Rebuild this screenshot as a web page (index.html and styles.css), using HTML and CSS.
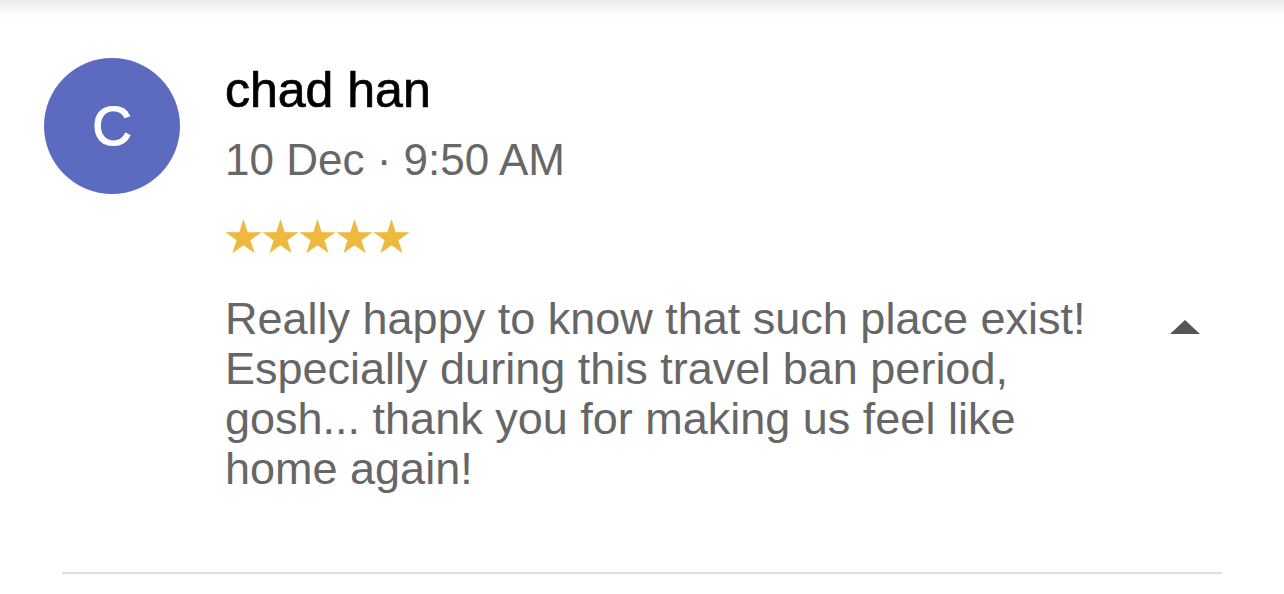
FILE: index.html
```html
<!DOCTYPE html>
<html lang="en">
<head>
  <meta charset="UTF-8" />
  <meta name="viewport" content="width=device-width, initial-scale=1.0" />
  <title>Review</title>
  <link rel="stylesheet" href="styles.css">
</head>
<body>
  <div class="top-shade"></div>
  <div class="review">
    <div class="avatar">C</div>
    <div class="review-body">
      <div class="name">chad han</div>
      <div class="date">10 Dec · 9:50 AM</div>
      <svg class="stars" width="186" height="35" viewBox="0 0 186 35" aria-label="5 stars">
        <defs>
          <polygon id="star" points="18.5,0 22.77,13.13 36.57,13.13 25.4,21.24 29.67,34.37 18.5,26.26 7.33,34.37 11.6,21.24 0.43,13.13 14.23,13.13"/>
        </defs>
        <use href="#star" x="0"/>
        <use href="#star" x="37"/>
        <use href="#star" x="74"/>
        <use href="#star" x="111"/>
        <use href="#star" x="148"/>
      </svg>
      <div class="text-row">
        <p class="text">Really happy to know that such place exist! Especially during this travel ban period, gosh... thank you for making us feel like home again!</p>
        <button class="collapse" aria-label="Collapse"></button>
      </div>
    </div>
  </div>
  <div class="divider"></div>
</body>
</html>
```

FILE: styles.css
```css
body {
  margin: 0;
  background-color: #fff;
  font-family: 'Liberation Sans', Arial, sans-serif;
  overflow: hidden;
}
.top-shade {
  height: 20px;
  background: linear-gradient(#ececec, #fdfdfd 70%, #fff);
}
.review {
  display: flex;
  align-items: flex-start;
  padding: 38px 0 78px 44px;
}
.avatar {
  width: 136px;
  height: 136px;
  border-radius: 50%;
  background-color: #5c6bc0;
  color: #fff;
  font-size: 55px;
  -webkit-text-stroke: 1.2px #fff;
  display: flex;
  align-items: center;
  justify-content: center;
  flex-shrink: 0;
}
.review-body {
  margin-left: 45px;
  padding-top: 4px;
}
.name {
  font-size: 50px;
  line-height: 56px;
  color: #000;
  -webkit-text-stroke: 0.7px #000;
}
.date {
  margin-top: 17px;
  font-size: 44px;
  line-height: 50px;
  color: #676767;
}
.stars {
  display: block;
  margin-top: 34px;
  fill: #efb83f;
}
.text-row {
  display: flex;
  align-items: flex-start;
  margin-top: 40px;
}
.text {
  margin: 0;
  width: 880px;
  font-size: 45px;
  line-height: 50px;
  color: #666;
}
.collapse {
  margin: 26px 0 0 65px;
  padding: 0;
  width: 0;
  height: 0;
  border: none;
  border-left: 15px solid transparent;
  border-right: 15px solid transparent;
  border-bottom: 14px solid #555;
  background: transparent;
}
.divider {
  height: 2px;
  margin: 0 62px;
  background-color: #dddddd;
}
```
